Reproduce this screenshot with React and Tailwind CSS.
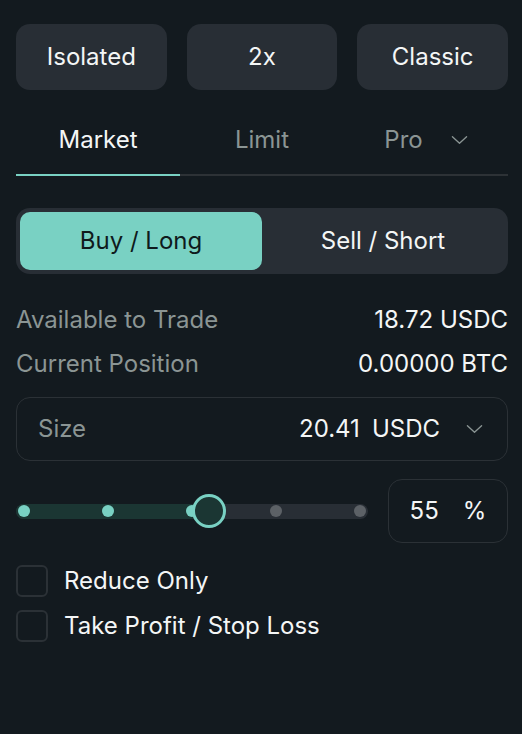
import { useState } from 'react';

const modes = ['Isolated', '2x', 'Classic'];
const tabs = ['Market', 'Limit', 'Pro'];
const marks = [0, 25, 50, 75, 100];

function Chevron({ className }) {
    return (
        <svg className={className} viewBox="0 0 18 10" fill="none" stroke="currentColor" strokeWidth="1.4" strokeLinecap="round" strokeLinejoin="round">
            <path d="M1.5 1.5 L9 8.5 L16.5 1.5" />
        </svg>
    );
}

export default function App() {
    const [tab, setTab] = useState(0);
    const [side, setSide] = useState('buy');
    const pct = 55;

    return (
        <div className="w-[522px] h-[734px] bg-[#131a1f] pl-4 pr-[14px] pt-6 text-[#f4f6f6] text-[24px] font-['Inter',sans-serif]">
            <div className="grid grid-cols-3 gap-5">
                {modes.map((m) => (
                    <button key={m} className="h-[66px] rounded-[14px] bg-[#282e35] text-[#f4f6f6]">
                        {m}
                    </button>
                ))}
            </div>

            <div className="mt-4 grid grid-cols-3 border-b-2 border-[#2d3236]">
                {tabs.map((t, i) => (
                    <button
                        key={t}
                        onClick={() => setTab(i)}
                        className={'relative h-[68px] flex items-center justify-center gap-7 ' + (i === tab ? 'text-[#f4f6f6]' : 'text-[#8b9594]')}
                    >
                        {t}
                        {t === 'Pro' && <Chevron className="w-[17px] h-[10px] text-[#8b9594]" />}
                        {i === tab && <span className="absolute left-0 right-0 -bottom-[2px] h-[2px] bg-[#79d1c3]" />}
                    </button>
                ))}
            </div>

            <div className="mt-8 h-[66px] rounded-[14px] bg-[#282e35] p-1 grid grid-cols-2">
                <button
                    onClick={() => setSide('buy')}
                    className={'rounded-[10px] ' + (side === 'buy' ? 'bg-[#79d1c3] text-[#0f1a1c]' : 'text-[#f4f6f6]')}
                >
                    Buy / Long
                </button>
                <button
                    onClick={() => setSide('sell')}
                    className={'rounded-[10px] ' + (side === 'sell' ? 'bg-[#e0617a] text-[#0f1a1c]' : 'text-[#f4f6f6]')}
                >
                    Sell / Short
                </button>
            </div>

            <div className="mt-[30px] flex flex-col gap-3">
                <div className="h-8 flex items-center justify-between">
                    <span className="text-[#8b9594]">Available to Trade</span>
                    <span>18.72 USDC</span>
                </div>
                <div className="h-8 flex items-center justify-between">
                    <span className="text-[#8b9594]">Current Position</span>
                    <span>0.00000 BTC</span>
                </div>
            </div>

            <div className="mt-[17px] h-16 rounded-[14px] border-[1.5px] border-[#2b3136] flex items-center pl-[21px] pr-6">
                <span className="text-[#8b9594]">Size</span>
                <span className="ml-auto">20.41</span>
                <span className="ml-3">USDC</span>
                <Chevron className="ml-[26px] w-[17px] h-[10px] text-[#8b9594]" />
            </div>

            <div className="mt-[18px] flex items-center gap-5">
                <div className="relative flex-1 h-[15px] rounded-full bg-[#282e35]">
                    <div className="absolute left-0 top-0 bottom-0 rounded-l-full bg-[#1b3633]" style={{ width: `calc(8px + (100% - 16px) * ${pct / 100})` }} />
                    {marks.map((m) => (
                        <span
                            key={m}
                            className={'absolute top-1/2 w-3 h-3 -ml-1.5 -mt-1.5 rounded-full ' + (m <= pct ? 'bg-[#79d1c3]' : 'bg-[#5c6166]')}
                            style={{ left: `calc(8px + (100% - 16px) * ${m / 100})` }}
                        />
                    ))}
                    <span
                        className="absolute top-1/2 w-[34px] h-[34px] -ml-[17px] -mt-[17px] rounded-full border-[3px] border-[#79d1c3] bg-[#1b3633]"
                        style={{ left: `calc(8px + (100% - 16px) * ${pct / 100})` }}
                    />
                </div>
                <div className="w-[120px] h-16 rounded-[14px] border-[1.5px] border-[#2b3136] flex items-center justify-center gap-6">
                    <span>{pct}</span>
                    <span>%</span>
                </div>
            </div>

            <div className="mt-[22px] flex flex-col gap-[13px]">
                {['Reduce Only', 'Take Profit / Stop Loss'].map((l) => (
                    <label key={l} className="h-8 flex items-center gap-4">
                        <span className="w-8 h-8 rounded-[6px] border-2 border-[#2b3136]" />
                        {l}
                    </label>
                ))}
            </div>
        </div>
    );
}
